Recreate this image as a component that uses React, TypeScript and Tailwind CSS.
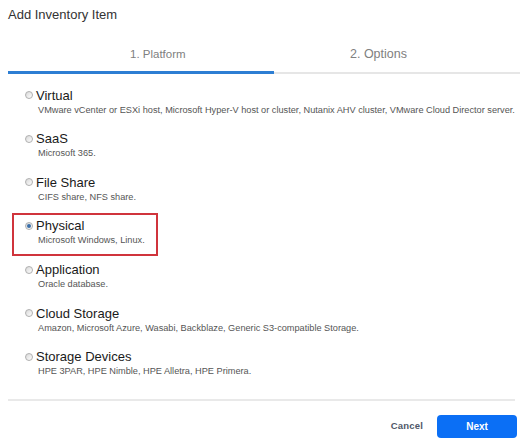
import React from "react";

const options = [
  {
    t: "Virtual",
    d: "VMware vCenter or ESXi host, Microsoft Hyper-V host or cluster, Nutanix AHV cluster, VMware Cloud Director server.",
  },
  { t: "SaaS", d: "Microsoft 365." },
  { t: "File Share", d: "CIFS share, NFS share." },
  { t: "Physical", d: "Microsoft Windows, Linux.", selected: true },
  { t: "Application", d: "Oracle database." },
  {
    t: "Cloud Storage",
    d: "Amazon, Microsoft Azure, Wasabi, Backblaze, Generic S3-compatible Storage.",
  },
  { t: "Storage Devices", d: "HPE 3PAR, HPE Nimble, HPE Alletra, HPE Primera." },
];

function Radio({ selected }: { selected?: boolean }) {
  return (
    <span className="relative flex h-[8px] w-[8px] shrink-0 items-center justify-center rounded-full border border-[#b0b0b0] bg-gradient-to-br from-[#d8d8d8] to-[#ffffff]">
      {selected && <span className="h-[4px] w-[4px] rounded-full bg-[#3a6ea8]" />}
    </span>
  );
}

export default function App() {
  return (
    <div className="h-[448px] w-[526px] overflow-hidden bg-white font-['Liberation_Sans',Arial,sans-serif]">
      <div className="pl-[8px] pt-[7px] text-[13px] leading-[16px] text-[#333333]">
        Add Inventory Item
      </div>
      <div className="ml-[8px] mr-[6px] mt-[24px] flex items-end">
        <div className="w-[266px] border-b-[3px] border-[#2d7ed3] pb-[10px] pl-[122px] text-[11.5px] leading-[14px] text-[#808080]">
          1. Platform
        </div>
        <div className="flex-1 border-b-[2px] border-[#e6e6e6] pb-[11px] pl-[76px] text-[12.5px] leading-[14px] text-[#808080]">
          2. Options
        </div>
      </div>
      <div className="mt-[13.5px] flex flex-col gap-[15.67px]">
        {options.map((o) => (
          <div key={o.t} className="relative pl-[25px]">
            {o.selected && (
              <div className="pointer-events-none absolute left-[12px] top-[-5.5px] h-[43px] w-[146px] border-2 border-[#d0343c]" />
            )}
            <div className="flex items-center gap-[3px]">
              <span className="-mt-[1px]">
                <Radio selected={o.selected} />
              </span>
              <span className="text-[13px] leading-[16px] text-[#1a1a1a]">{o.t}</span>
            </div>
            <div className="whitespace-nowrap pl-[13px] text-[9.2px] leading-[12px] text-[#555555]">
              {o.d}
            </div>
          </div>
        ))}
      </div>
      <div className="ml-[8px] mt-[21.5px] h-[2px] w-[507px] bg-[#e9e9e9]" />
      <div className="mt-[14px] flex items-center justify-end pr-[9px]">
        <span className="mr-[14px] text-[9.5px] font-bold tracking-[0.2px] text-[#4f5868]">
          Cancel
        </span>
        <button className="flex h-[23px] w-[80px] items-center justify-center rounded-[4px] bg-[#0b6ff5] text-[10px] font-bold text-white">
          Next
        </button>
      </div>
    </div>
  );
}
